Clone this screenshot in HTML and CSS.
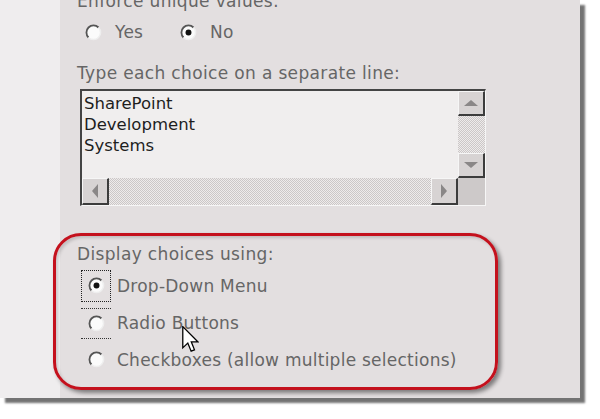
FILE: index.html
```html
<!DOCTYPE html>
<html>
<head>
<meta charset="utf-8">
<link rel="stylesheet" href="styles.css">
</head>
<body>
<div class="shot">
  <div class="strip"></div>
  <div class="panel">
    <div class="label first">Enforce unique values:</div>
    <div class="radio-row">
      <span class="opt"><svg class="radio" viewBox="0 0 16 16"><circle cx="8" cy="8" r="6.6" fill="#fbfbfb"/><path d="M3.3 12.7A6.6 6.6 0 0 1 12.7 3.3" stroke="#555" stroke-width="1.7" fill="none"/><path d="M12.7 3.3A6.6 6.6 0 0 1 3.3 12.7" stroke="#eeeeee" stroke-width="1.4" fill="none"/></svg><span class="txt">Yes</span></span>
      <span class="opt"><svg class="radio" viewBox="0 0 16 16"><circle cx="8" cy="8" r="6.6" fill="#fbfbfb"/><path d="M3.3 12.7A6.6 6.6 0 0 1 12.7 3.3" stroke="#555" stroke-width="1.7" fill="none"/><path d="M12.7 3.3A6.6 6.6 0 0 1 3.3 12.7" stroke="#eeeeee" stroke-width="1.4" fill="none"/><circle cx="8" cy="8" r="2.8" fill="#111"/></svg><span class="txt">No</span></span>
    </div>
    <div class="label second">Type each choice on a separate line:</div>
    <div class="textbox">
      <div class="tb-content">SharePoint<br>Development<br>Systems</div>
      <div class="vscroll">
        <div class="sbtn"><span class="tri up"></span></div>
        <div class="track"></div>
        <div class="sbtn"><span class="tri down"></span></div>
      </div>
      <div class="hscroll">
        <div class="sbtn"><span class="tri left"></span></div>
        <div class="track"></div>
        <div class="sbtn"><span class="tri right"></span></div>
      </div>
      <div class="corner"></div>
    </div>
    <div class="label third">Display choices using:</div>
    <div class="choices">
      <div class="choice"><span class="rcell focus"><svg class="radio" viewBox="0 0 16 16"><circle cx="8" cy="8" r="6.6" fill="#fbfbfb"/><path d="M3.3 12.7A6.6 6.6 0 0 1 12.7 3.3" stroke="#555" stroke-width="1.7" fill="none"/><path d="M12.7 3.3A6.6 6.6 0 0 1 3.3 12.7" stroke="#eeeeee" stroke-width="1.4" fill="none"/><circle cx="8" cy="8" r="2.8" fill="#111"/></svg></span><span class="txt">Drop-Down Menu</span></div>
      <div class="choice"><span class="rcell dotted"><svg class="radio" viewBox="0 0 16 16"><circle cx="8" cy="8" r="6.6" fill="#fbfbfb"/><path d="M3.3 12.7A6.6 6.6 0 0 1 12.7 3.3" stroke="#555" stroke-width="1.7" fill="none"/><path d="M12.7 3.3A6.6 6.6 0 0 1 3.3 12.7" stroke="#eeeeee" stroke-width="1.4" fill="none"/></svg></span><span class="txt">Radio Buttons</span></div>
      <div class="choice"><span class="rcell"><svg class="radio" viewBox="0 0 16 16"><circle cx="8" cy="8" r="6.6" fill="#fbfbfb"/><path d="M3.3 12.7A6.6 6.6 0 0 1 12.7 3.3" stroke="#555" stroke-width="1.7" fill="none"/><path d="M12.7 3.3A6.6 6.6 0 0 1 3.3 12.7" stroke="#eeeeee" stroke-width="1.4" fill="none"/></svg></span><span class="txt">Checkboxes (allow multiple selections)</span></div>
    </div>
  </div>
  <div class="highlight"></div>
  <svg class="cursor" viewBox="0 0 13 21"><path d="M0.5 0.5 L0.5 17 L4.4 13.3 L7 19.6 L9.6 18.5 L7.1 12.3 L12.2 12.3 Z" fill="#fff" stroke="#000" stroke-width="1" stroke-linejoin="miter"/></svg>
</div>
</body>
</html>
```
FILE: styles.css
```css
html, body {
  margin: 0;
  padding: 0;
  background: #ffffff;
}
body {
  width: 600px;
  height: 419px;
  overflow: hidden;
  font-family: "DejaVu Sans", Verdana, sans-serif;
}
.shot {
  position: relative;
  width: 580px;
  height: 398px;
  display: flex;
  box-shadow: 5px 5px 2px rgba(0,0,0,0.55);
}
.strip {
  width: 60px;
  flex: none;
  background: #efedee;
}
.panel {
  flex: 1;
  background: #e3dfe0;
  padding-left: 17px;
  overflow: hidden;
  display: flex;
  flex-direction: column;
}
.label {
  color: #666666;
  font-size: 17px;
  line-height: 20px;
  height: 20px;
  letter-spacing: 0.35px;
  white-space: nowrap;
  flex: none;
}
.label.first {
  margin-top: -9px;
}
.radio-row {
  display: flex;
  align-items: center;
  height: 22px;
  margin-top: 10px;
  padding-left: 8px;
  flex: none;
}
.opt {
  display: flex;
  align-items: center;
  width: 95px;
}
.radio {
  width: 17px;
  height: 17px;
  flex: none;
}
.txt {
  color: #666666;
  font-size: 17px;
  letter-spacing: 0.25px;
  white-space: nowrap;
}
.opt .txt {
  margin-left: 13px;
}
.label.second {
  margin-top: 20px;
}
.textbox {
  flex: none;
  margin-top: 6px;
  margin-left: 3px;
  width: 406px;
  height: 117px;
  box-sizing: border-box;
  border-top: 2px solid #444;
  border-left: 2px solid #444;
  border-right: 1px solid #f6f6f6;
  border-bottom: 1px solid #f6f6f6;
  background: #f0eeee;
  display: grid;
  grid-template-columns: 1fr 27px;
  grid-template-rows: 1fr 27px;
}
.tb-content {
  color: #1e1e1e;
  font-size: 16.5px;
  line-height: 21px;
  padding: 2px 0 0 2px;
}
.vscroll {
  display: flex;
  flex-direction: column;
}
.hscroll {
  display: flex;
}
.track {
  flex: 1;
  background: repeating-conic-gradient(#cbc7c7 0 25%, #eeebeb 0 50%) 0 0 / 2px 2px;
}
.sbtn {
  width: 27px;
  height: 27px;
  box-sizing: border-box;
  flex: none;
  background: #d7d3d3;
  border-top: 1px solid #f6f6f6;
  border-left: 1px solid #f6f6f6;
  border-right: 2px solid #3c3c3c;
  border-bottom: 2px solid #3c3c3c;
  display: flex;
  align-items: center;
  justify-content: center;
}
.vscroll .sbtn {
  height: 25px;
}
.corner {
  background: #cdc9c9;
}
.tri {
  width: 0;
  height: 0;
  border: 5px solid transparent;
}
.tri.up {
  border-bottom: 6px solid #8a8787;
  border-top-width: 0;
  border-left-width: 7px;
  border-right-width: 7px;
}
.tri.down {
  border-top: 6px solid #8a8787;
  border-bottom-width: 0;
  border-left-width: 7px;
  border-right-width: 7px;
}
.tri.left {
  border-right: 6px solid #8a8787;
  border-left-width: 0;
  border-top-width: 7px;
  border-bottom-width: 7px;
}
.tri.right {
  border-left: 6px solid #8a8787;
  border-right-width: 0;
  border-top-width: 7px;
  border-bottom-width: 7px;
}
.label.third {
  margin-top: 38px;
}
.choices {
  display: flex;
  flex-direction: column;
  margin-top: 3px;
  flex: none;
}
.choice {
  display: flex;
  align-items: center;
  height: 37px;
}
.rcell {
  width: 30px;
  height: 32px;
  margin-left: 4px;
  box-sizing: border-box;
  display: flex;
  align-items: center;
  justify-content: center;
  flex: none;
}
.rcell.focus {
  border: 1px dotted #222;
}
.rcell.dotted {
  border-top: 1px dotted #333;
  border-bottom: 1px dotted #333;
  height: 31px;
  margin-top: 2px;
}
.choice .txt {
  margin-left: 6px;
}
.highlight {
  position: absolute;
  left: 53px;
  top: 233px;
  width: 445px;
  height: 157px;
  box-sizing: border-box;
  border: 3px solid #c4111d;
  border-radius: 28px;
  box-shadow: 3px 3px 4px rgba(0,0,0,0.45), inset 2px 2px 3px rgba(0,0,0,0.15);
}
.cursor {
  position: absolute;
  left: 182px;
  top: 326px;
  width: 17px;
  height: 27px;
}
```
